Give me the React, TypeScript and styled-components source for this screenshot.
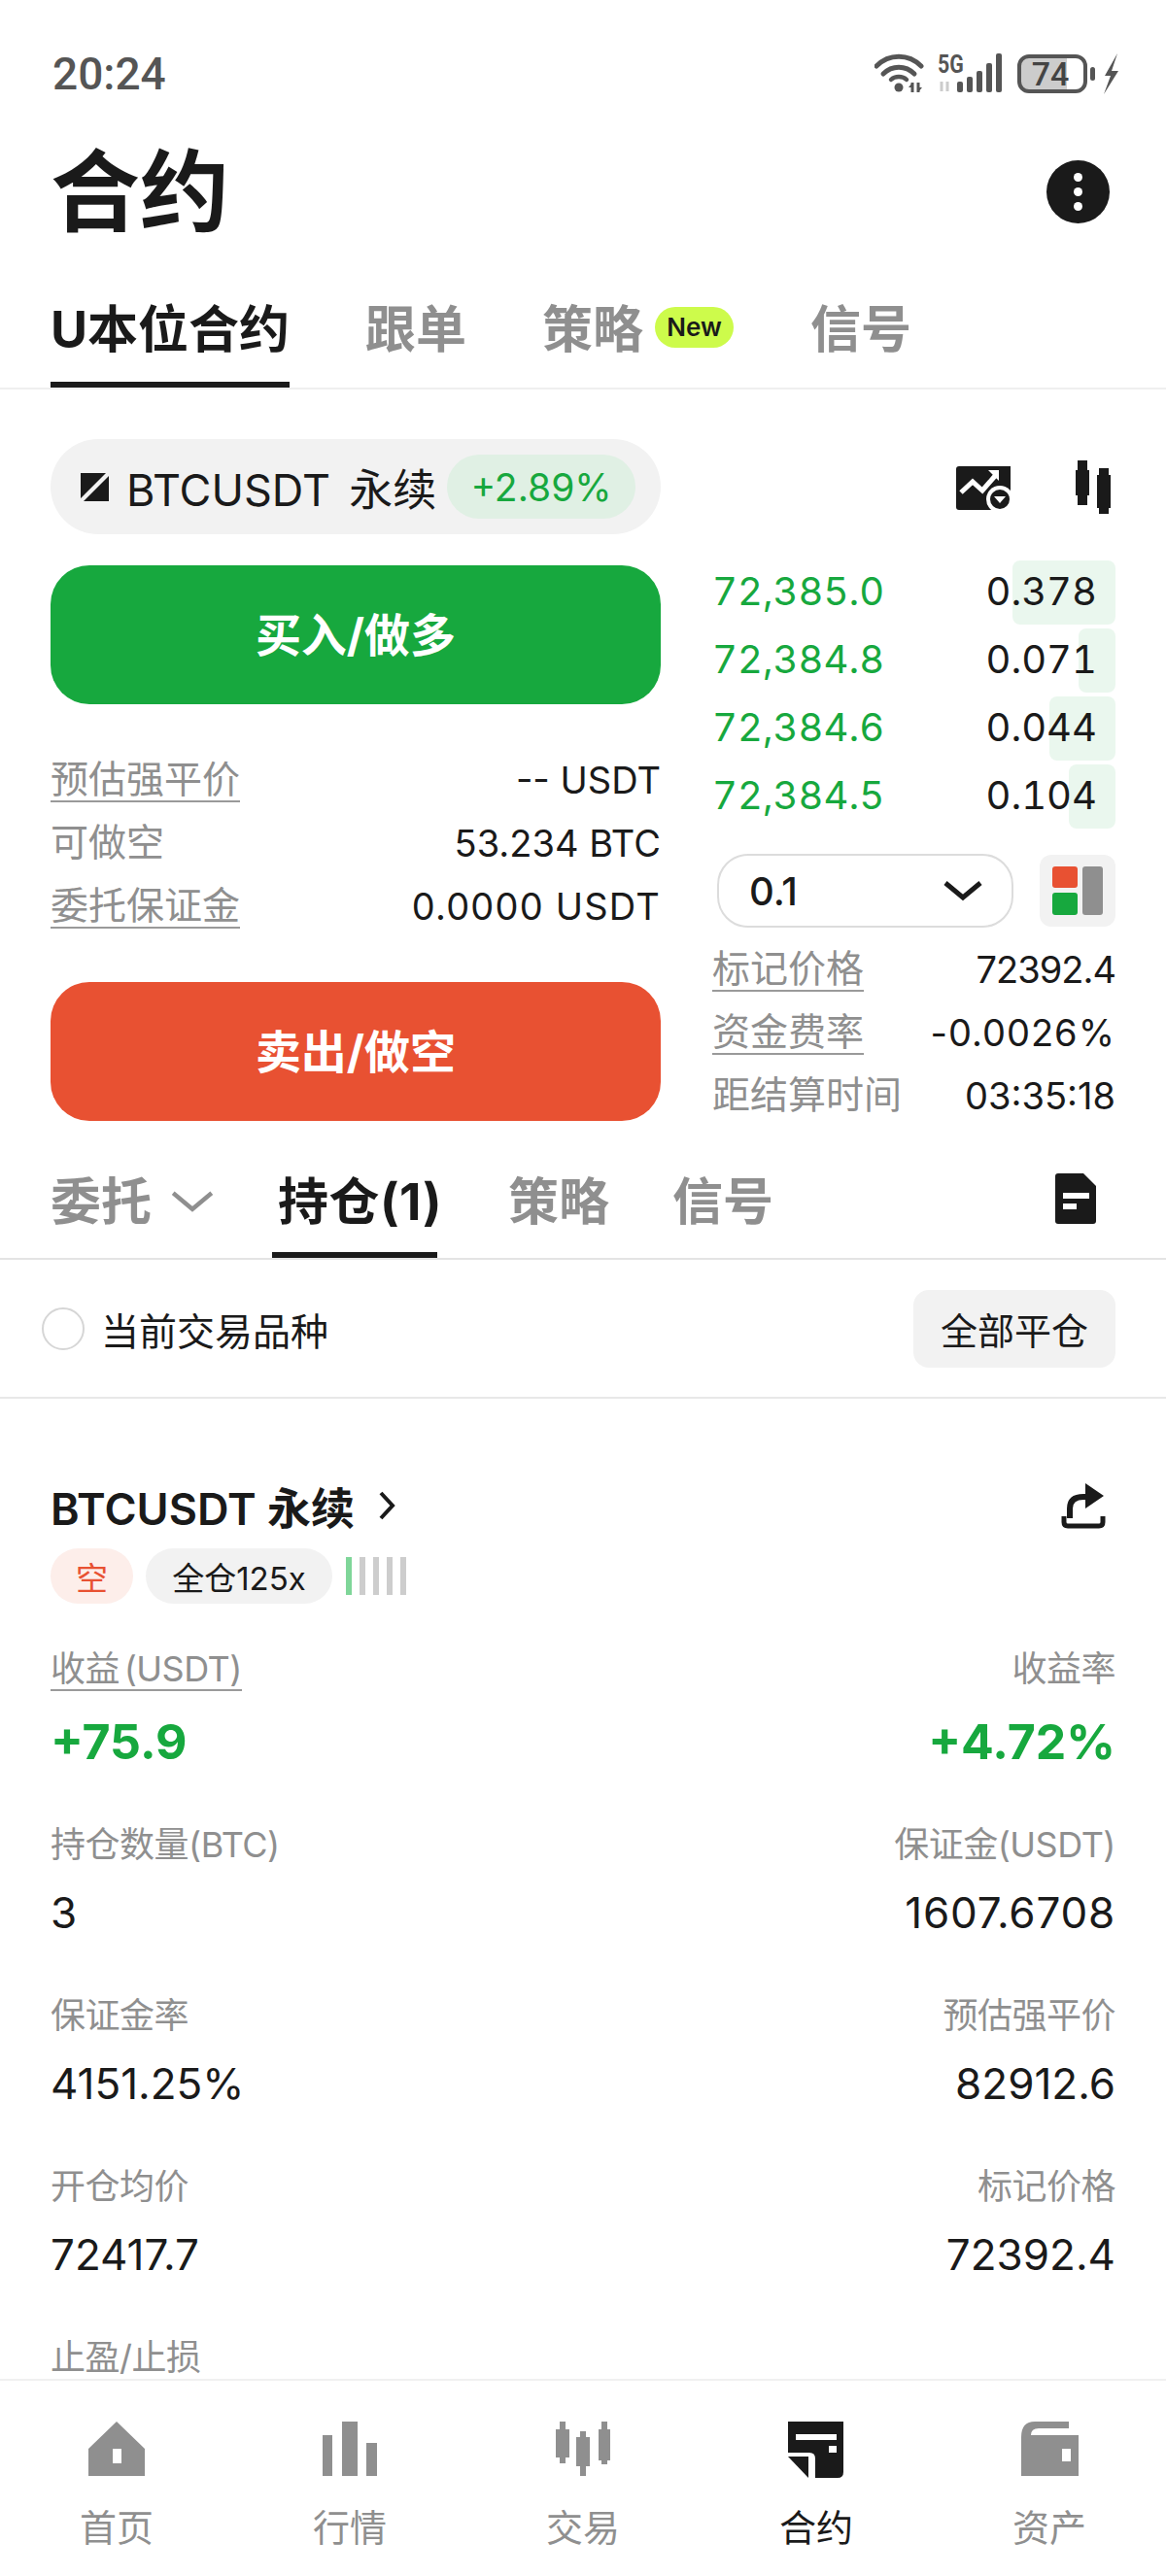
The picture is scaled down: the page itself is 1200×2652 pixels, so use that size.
import React from 'react';
import styled, { createGlobalStyle } from 'styled-components';

const GlobalStyle = createGlobalStyle`
  html, body {
    margin: 0;
    padding: 0;
    background: #fff;
  }
  body {
    font-family: Inter, "Noto Sans CJK SC", sans-serif;
    color: #1a1a1a;
  }
  * {
    box-sizing: border-box;
  }
`;

const GREEN = '#17a83e';
const RED = '#e85132';
const GREY = '#8f8f8f';
const INK = '#1a1a1a';

const Page = styled.div`
  width: 1200px;
  height: 2652px;
  display: flex;
  flex-direction: column;
  overflow: hidden;
`;

const Scroll = styled.div`
  flex: 1;
  min-height: 0;
  overflow: hidden;
`;

const StatusBar = styled.div`
  height: 130px;
  padding: 32px 48px 10px 54px;
  display: flex;
  align-items: center;
  justify-content: space-between;
`;

const Clock = styled.span`
  font-family: Roboto, sans-serif;
  font-size: 46px;
  font-weight: 500;
  color: #555;
`;

const StatusIcons = styled.div`
  display: flex;
  align-items: center;
`;

const IconGap = styled.span<{ $left?: number; $top?: number }>`
  display: flex;
  margin-left: ${(p) => p.$left ?? 0}px;
  margin-top: ${(p) => p.$top ?? 0}px;
`;

const SignalBox = styled.span`
  position: relative;
  display: flex;
  width: 68px;
  height: 42px;
  margin-left: 13px;
`;

const FiveG = styled.span`
  position: absolute;
  left: 0;
  top: 0;
  font-family: Roboto, sans-serif;
  font-size: 26px;
  line-height: 22px;
  font-weight: 700;
  color: #555;
  transform: scaleX(0.82);
  transform-origin: left center;
`;

const Battery = styled.div`
  width: 72px;
  height: 40px;
  margin-left: 14px;
  border: 4px solid #555;
  border-radius: 12px;
  background: linear-gradient(90deg, #ccc 0 74%, #fff 74%);
  display: flex;
  align-items: center;
  justify-content: center;
  font-family: Roboto, sans-serif;
  font-size: 34px;
  font-weight: 500;
  color: #444;
  padding-right: 4px;
`;

const BatteryNub = styled.span`
  width: 5px;
  height: 14px;
  margin: 0 8px 0 3px;
  border-radius: 3px;
  background: #555;
`;

const TitleRow = styled.div`
  height: 135px;
  padding: 0 58px 0 52px;
  display: flex;
  align-items: center;
  justify-content: space-between;
`;

const Title = styled.h1`
  margin: 0;
  font-size: 92px;
  font-weight: 700;
  line-height: 1;
`;

const MoreButton = styled.div`
  width: 65px;
  height: 65px;
  border-radius: 50%;
  background: ${INK};
  display: flex;
  flex-direction: column;
  align-items: center;
  justify-content: center;
  gap: 6px;
`;

const MoreDot = styled.span`
  width: 9px;
  height: 9px;
  border-radius: 50%;
  background: #fff;
`;

const TabBar = styled.div<{ $height: number }>`
  height: ${(p) => p.$height}px;
  padding: 0 52px;
  display: flex;
  align-items: stretch;
  border-bottom: 2px solid #efefef;
`;

const Tab = styled.div<{ $active?: boolean; $gap: number; $pad?: number }>`
  display: flex;
  align-items: center;
  margin-right: ${(p) => p.$gap}px;
  padding-top: ${(p) => p.$pad ?? 22}px;
  font-size: 52px;
  font-weight: 700;
  line-height: 1;
  white-space: nowrap;
  color: ${(p) => (p.$active ? INK : GREY)};
  border-bottom: 6px solid ${(p) => (p.$active ? INK : 'transparent')};
`;

const HoldingTab = styled(Tab)`
  width: 170px;
  padding-left: 6px;
  letter-spacing: 0.5px;
`;

const NewBadge = styled.span`
  width: 81px;
  height: 42px;
  margin-left: 12px;
  margin-top: -6px;
  border-radius: 21px;
  background: #cdfb4b;
  color: ${INK};
  font-size: 26px;
  font-weight: 600;
  display: flex;
  align-items: center;
  justify-content: center;
`;

const TabIcon = styled.div`
  margin-left: auto;
  margin-right: 72px;
  padding-top: 12px;
  display: flex;
  align-items: center;
`;

const TradeGrid = styled.div`
  padding: 51px 52px 0;
  display: grid;
  grid-template-columns: 628px 415px;
  column-gap: 53px;
`;

const Column = styled.div`
  display: flex;
  flex-direction: column;
`;

const SymbolPill = styled.div`
  height: 98px;
  border-radius: 49px;
  background: #f2f2f2;
  padding: 0 26px 0 31px;
  display: flex;
  align-items: center;
`;

const SymbolName = styled.span`
  margin-left: 18px;
  font-size: 45px;
  white-space: pre;
  word-spacing: -3px;
`;

const ChangePill = styled.span`
  margin-left: auto;
  width: 194px;
  height: 66px;
  border-radius: 33px;
  background: #e0f0e4;
  color: ${GREEN};
  font-size: 39px;
  display: flex;
  align-items: center;
  justify-content: center;
`;

const ActionButton = styled.div<{ $color: string; $top: number }>`
  height: 143px;
  margin-top: ${(p) => p.$top}px;
  padding-bottom: 6px;
  border-radius: 40px;
  background: ${(p) => p.$color};
  color: #fff;
  font-size: 47px;
  font-weight: 700;
  display: flex;
  align-items: center;
  justify-content: center;
`;

const InfoList = styled.div<{ $top: number }>`
  margin-top: ${(p) => p.$top}px;
  display: flex;
  flex-direction: column;
`;

const InfoRow = styled.div`
  height: 65px;
  display: flex;
  align-items: center;
  justify-content: space-between;
`;

const InfoLabel = styled.span<{ $dashed?: boolean }>`
  font-size: 39px;
  line-height: 44px;
  color: ${GREY};
  border-bottom: 2px solid ${(p) => (p.$dashed ? '#9a9a9a' : 'transparent')};
`;

const InfoValue = styled.span<{ $spread?: number }>`
  font-size: 38px;
  letter-spacing: ${(p) => p.$spread ?? 0}px;
  color: ${INK};
`;

const ChartTools = styled.div`
  height: 125px;
  padding: 22px 5px 0 251px;
  display: flex;
  align-items: flex-start;
  justify-content: space-between;
`;

const DepthRow = styled.div`
  position: relative;
  height: 66px;
  margin-bottom: 4px;
  padding: 0 19px 3px 0;
  display: flex;
  align-items: center;
  justify-content: space-between;
  font-size: 40px;
  font-variant-numeric: tabular-nums;
`;

const DepthBar = styled.span`
  position: absolute;
  right: 0;
  top: 0;
  bottom: 0;
  border-radius: 8px;
  background: rgba(23, 168, 62, 0.09);
`;

const DepthPrice = styled.span`
  position: relative;
  color: ${GREEN};
`;

const DepthQty = styled.span`
  position: relative;
`;

const ControlRow = styled.div`
  margin-top: 22px;
  margin-bottom: 10px;
  padding-left: 5px;
  display: flex;
  align-items: center;
  justify-content: space-between;
`;

const StepSelect = styled.div`
  width: 305px;
  height: 76px;
  border: 2px solid #dcdcdc;
  border-radius: 32px;
  padding: 0 30px 0 31px;
  display: flex;
  align-items: center;
  justify-content: space-between;
  font-size: 40px;
  font-weight: 500;
`;

const LayoutButton = styled.div`
  width: 78px;
  height: 74px;
  border-radius: 12px;
  background: #f2f2f2;
  display: flex;
  align-items: center;
  justify-content: center;
`;

const OrdersTabs = styled(TabBar)`
  padding: 0 0 0 52px;
  border-bottom-color: #e4e4e4;
`;

const FilterRow = styled.div`
  height: 143px;
  padding: 0 52px 0 43px;
  display: flex;
  align-items: center;
  border-bottom: 2px solid #e8e8e8;
`;

const Radio = styled.span`
  width: 44px;
  height: 44px;
  border-radius: 50%;
  border: 2px solid #d6d6d6;
`;

const FilterText = styled.span`
  margin-left: 17px;
  font-size: 39px;
`;

const CloseAll = styled.div`
  margin-left: auto;
  width: 208px;
  height: 80px;
  border-radius: 16px;
  background: #f2f2f2;
  font-size: 38px;
  display: flex;
  align-items: center;
  justify-content: center;
`;

const Position = styled.div`
  padding: 80px 52px 0;
`;

const PositionHead = styled.div`
  height: 60px;
  display: flex;
  align-items: center;
  padding: 0 10px 0 0;
`;

const PositionName = styled.span`
  font-size: 45px;
  font-weight: 600;
`;

const ShareSlot = styled.span`
  margin-left: auto;
  display: flex;
`;

const TagRow = styled.div`
  margin-top: 14px;
  display: flex;
  align-items: center;
`;

const Tag = styled.span<{ $tone: 'red' | 'grey'; $width: number }>`
  width: ${(p) => p.$width}px;
  height: 57px;
  margin-right: 13px;
  border-radius: 29px;
  font-size: 33px;
  display: flex;
  align-items: center;
  justify-content: center;
  background: ${(p) => (p.$tone === 'red' ? '#fdeeea' : '#f2f2f2')};
  color: ${(p) => (p.$tone === 'red' ? RED : INK)};
`;

const LeverBars = styled.span`
  display: flex;
  gap: 8px;
  margin-left: 1px;
`;

const LeverBar = styled.span<{ $on?: boolean }>`
  width: 6px;
  height: 39px;
  background: ${(p) => (p.$on ? '#7fd699' : '#cdcdcd')};
`;

const Stats = styled.div`
  margin-top: 46px;
  display: grid;
  grid-template-columns: 1fr 1fr;
  row-gap: 59px;
`;

const Stat = styled.div<{ $right?: boolean }>`
  display: flex;
  flex-direction: column;
  align-items: ${(p) => (p.$right ? 'flex-end' : 'flex-start')};
`;

const StatLabel = styled.span<{ $dashed?: boolean }>`
  font-size: 36px;
  line-height: 42px;
  letter-spacing: -0.5px;
  word-spacing: -5px;
  color: ${GREY};
  border-bottom: 2px solid ${(p) => (p.$dashed ? '#9a9a9a' : 'transparent')};
`;

const StatValue = styled.span<{ $gain?: boolean; $spread?: number }>`
  margin-top: ${(p) => (p.$gain ? 26 : 21)}px;
  margin-bottom: 0;
  line-height: 52px;
  letter-spacing: ${(p) => p.$spread ?? 0}px;
  font-size: ${(p) => (p.$gain ? 50 : 44)}px;
  font-weight: ${(p) => (p.$gain ? 700 : 400)};
  color: ${(p) => (p.$gain ? GREEN : INK)};
`;

const BottomNav = styled.nav`
  height: 203px;
  border-top: 2px solid #f0f0f0;
  display: grid;
  grid-template-columns: repeat(5, 240px);
`;

const NavItem = styled.div<{ $active?: boolean }>`
  padding-top: 42px;
  display: flex;
  flex-direction: column;
  align-items: center;
  color: ${(p) => (p.$active ? INK : GREY)};
`;

const NavIconBox = styled.span`
  height: 58px;
  display: flex;
`;

const NavLabel = styled.span`
  margin-top: 26px;
  font-size: 38px;
  line-height: 50px;
`;

const WifiIcon = () => (
  <svg width="52" height="42" viewBox="0 0 52 42" fill="none" stroke="#555" strokeLinecap="round">
    <path d="M2 13C15 0 35 0 48 13" strokeWidth="5" />
    <path d="M9 21C18 12 32 12 41 21" strokeWidth="5" />
    <path d="M17 27C21 23 29 23 33 27" strokeWidth="4.5" />
    <circle cx="25" cy="35" r="4.5" fill="#555" stroke="none" />
    <path d="M39 30v10M45 30v10" strokeWidth="3" stroke="#555" strokeLinecap="butt" />
    <path d="M35 35l4-5v5zM49 35l-4 5v-5z" fill="#555" stroke="none" />
  </svg>
);

const SignalBars = () => (
  <svg width="68" height="42" viewBox="0 0 68 42">
    <path d="M4 29v10M10 29v10" stroke="#ccc" strokeWidth="3" />
    <rect x="20" y="29" width="6" height="11" rx="2" fill="#555" />
    <rect x="30" y="24" width="6" height="16" rx="2" fill="#555" />
    <rect x="40" y="18" width="6" height="22" rx="2" fill="#555" />
    <rect x="50" y="10" width="6" height="30" rx="2" fill="#555" />
    <rect x="60" y="0" width="6" height="40" rx="2" fill="#555" />
  </svg>
);

const BoltIcon = () => (
  <svg width="17" height="42" viewBox="0 0 17 42">
    <path d="M15 0L2 23h6L1 42l15-24H9z" fill="#555" />
  </svg>
);

const PairIcon = () => (
  <svg width="29" height="29" viewBox="0 0 29 29">
    <path d="M0 0h26L0 26zM29 3v26H3z" fill={INK} />
  </svg>
);

const ChartIcon = () => (
  <svg width="56" height="45" viewBox="0 0 56 45">
    <path d="M3 0h53v30L40 45H3q-3 0-3-3V3q0-3 3-3z" fill={INK} />
    <path d="M5 27l12-11 10 9 13-15" stroke="#fff" strokeWidth="5" fill="none" />
    <path d="M33 4h11v11z" fill="#fff" />
    <circle cx="45" cy="34" r="14" fill="#fff" />
    <circle cx="45" cy="34" r="10" fill={INK} />
    <path d="M39 31h12l-6 7z" fill="#fff" />
  </svg>
);

const CandlesIcon = () => (
  <svg width="36" height="55" viewBox="0 0 36 55" fill={INK}>
    <rect x="2" width="10" height="46" />
    <rect y="10" width="14" height="26" />
    <rect x="24" y="8" width="10" height="47" />
    <rect x="22" y="15" width="14" height="34" />
  </svg>
);

const ChevronDown = ({ size, color, weight }: { size: number; color: string; weight: number }) => (
  <svg width={size} height={size * 0.55} viewBox="0 0 40 22" fill="none">
    <path d="M2 3l18 15L38 3" stroke={color} strokeWidth={weight} />
  </svg>
);

const LayoutIcon = () => (
  <svg width="52" height="50" viewBox="0 0 52 50">
    <rect width="26" height="22" rx="3" fill={RED} />
    <rect y="27" width="26" height="23" rx="3" fill={GREEN} />
    <rect x="31" width="21" height="50" rx="3" fill={GREY} />
  </svg>
);

const DocIcon = () => (
  <svg width="42" height="52" viewBox="0 0 42 52">
    <path d="M3 0h26l13 13v36q0 3-3 3H3q-3 0-3-3V3q0-3 3-3z" fill={INK} />
    <rect x="8" y="20" width="27" height="6" fill="#fff" />
    <rect x="8" y="31" width="14" height="6" fill="#fff" />
  </svg>
);

const ChevronRight = () => (
  <svg width="20" height="32" viewBox="0 0 20 32" fill="none">
    <path d="M4 3l12 13L4 29" stroke={INK} strokeWidth="4" />
  </svg>
);

const ShareIcon = () => (
  <svg width="46" height="47" viewBox="0 0 46 47" fill="none">
    <path d="M3 34v6q0 4 4 4h32q4 0 4-4v-6" stroke={INK} strokeWidth="5" />
    <path d="M9 36V26q0-12 14-12h5" stroke={INK} strokeWidth="6" />
    <path d="M25 0l19 13-19 13z" fill={INK} />
  </svg>
);

const HomeIcon = () => (
  <svg width="58" height="56" viewBox="0 0 58 56" fill="currentColor">
    <path d="M29 0l29 28v28H0V28zM25 28v15h9V28z" fillRule="evenodd" />
  </svg>
);

const MarketIcon = () => (
  <svg width="56" height="56" viewBox="0 0 56 56" fill="currentColor">
    <rect y="14" width="10" height="42" />
    <rect x="20" width="16" height="56" />
    <rect x="45" y="22" width="11" height="34" />
  </svg>
);

const TradeIcon = () => (
  <svg width="56" height="56" viewBox="0 0 56 56" fill="currentColor">
    <path d="M4 0h6v8h4v29h-4v6H4v-6H0V8h4z" />
    <path d="M25 10h6v6h4v30h-4v10h-6V46h-4V16h4z" />
    <path d="M47 0h6v8h3v32h-3v4h-6v-4h-3V8h3z" />
  </svg>
);

const ContractIcon = () => (
  <svg width="58" height="58" viewBox="0 0 58 58" fill="currentColor">
    <path d="M0 0h57v52q0 6-6 6H28V38q0-6-6-6H0z" />
    <path d="M0 36h21v22z" />
    <rect x="8" y="13" width="42" height="6" fill="#fff" />
    <rect x="42" y="25" width="8" height="7" fill="#fff" />
  </svg>
);

const WalletIcon = () => (
  <svg width="59" height="56" viewBox="0 0 59 56" fill="currentColor">
    <path d="M0 16Q0 0 14 0h35v7H18q-8 0-8 7h49v42H0zM42 28v13h9V28z" fillRule="evenodd" />
  </svg>
);

const depth = [
  { price: '72,385.0', qty: '0.378', bar: 106 },
  { price: '72,384.8', qty: '0.071', bar: 38 },
  { price: '72,384.6', qty: '0.044', bar: 68 },
  { price: '72,384.5', qty: '0.104', bar: 48 },
];

const stats = [
  { left: ['持仓数量(BTC)', '3'], right: ['保证金(USDT)', '1607.6708'], spread: 0.8 },
  { left: ['保证金率', '4151.25%'], right: ['预估强平价', '82912.6'] },
  { left: ['开仓均价', '72417.7'], right: ['标记价格', '72392.4'] },
];

const navItems = [
  { label: '首页', icon: <HomeIcon /> },
  { label: '行情', icon: <MarketIcon /> },
  { label: '交易', icon: <TradeIcon /> },
  { label: '合约', icon: <ContractIcon />, active: true },
  { label: '资产', icon: <WalletIcon /> },
];

export default function App() {
  return (
    <Page>
      <GlobalStyle />
      <Scroll>
        <StatusBar>
          <Clock>20:24</Clock>
          <StatusIcons>
            <WifiIcon />
            <SignalBox>
              <SignalBars />
              <FiveG>5G</FiveG>
            </SignalBox>
            <Battery>74</Battery>
            <BatteryNub />
            <BoltIcon />
          </StatusIcons>
        </StatusBar>

        <TitleRow>
          <Title>合约</Title>
          <MoreButton>
            <MoreDot />
            <MoreDot />
            <MoreDot />
          </MoreButton>
        </TitleRow>

        <TabBar $height={136}>
          <Tab $active $gap={78}>U本位合约</Tab>
          <Tab $gap={78}>跟单</Tab>
          <Tab $gap={79}>策略<NewBadge>New</NewBadge></Tab>
          <Tab $gap={0}>信号</Tab>
        </TabBar>

        <TradeGrid>
          <Column>
            <SymbolPill>
              <PairIcon />
              <SymbolName>BTCUSDT  永续</SymbolName>
              <ChangePill>+2.89%</ChangePill>
            </SymbolPill>
            <ActionButton $color={GREEN} $top={32}>买入/做多</ActionButton>
            <InfoList $top={45}>
              <InfoRow>
                <InfoLabel $dashed>预估强平价</InfoLabel>
                <InfoValue>-- USDT</InfoValue>
              </InfoRow>
              <InfoRow>
                <InfoLabel>可做空</InfoLabel>
                <InfoValue>53.234 BTC</InfoValue>
              </InfoRow>
              <InfoRow>
                <InfoLabel $dashed>委托保证金</InfoLabel>
                <InfoValue $spread={1.2}>0.0000 USDT</InfoValue>
              </InfoRow>
            </InfoList>
            <ActionButton $color={RED} $top={46}>卖出/做空</ActionButton>
          </Column>

          <Column>
            <ChartTools>
              <IconGap $top={6}>
                <ChartIcon />
              </IconGap>
              <CandlesIcon />
            </ChartTools>
            {depth.map((row) => (
              <DepthRow key={row.price}>
                <DepthBar style={{ width: row.bar }} />
                <DepthPrice>{row.price}</DepthPrice>
                <DepthQty>{row.qty}</DepthQty>
              </DepthRow>
            ))}
            <ControlRow>
              <StepSelect>
                0.1
                <ChevronDown size={40} color={INK} weight={5} />
              </StepSelect>
              <LayoutButton>
                <LayoutIcon />
              </LayoutButton>
            </ControlRow>
            <InfoRow>
              <InfoLabel $dashed>标记价格</InfoLabel>
              <InfoValue $spread={-1}>72392.4</InfoValue>
            </InfoRow>
            <InfoRow>
              <InfoLabel $dashed>资金费率</InfoLabel>
              <InfoValue $spread={1}>-0.0026%</InfoValue>
            </InfoRow>
            <InfoRow>
              <InfoLabel>距结算时间</InfoLabel>
              <InfoValue>03:35:18</InfoValue>
            </InfoRow>
          </Column>
        </TradeGrid>

        <OrdersTabs $height={137}>
          <Tab $gap={60} $pad={26}>
            委托
            <IconGap $left={20}>
              <ChevronDown size={44} color={GREY} weight={4} />
            </IconGap>
          </Tab>
          <HoldingTab $active $gap={73} $pad={26}>持仓(1)</HoldingTab>
          <Tab $gap={65} $pad={26}>策略</Tab>
          <Tab $gap={0} $pad={26}>信号</Tab>
          <TabIcon>
            <DocIcon />
          </TabIcon>
        </OrdersTabs>

        <FilterRow>
          <Radio />
          <FilterText>当前交易品种</FilterText>
          <CloseAll>全部平仓</CloseAll>
        </FilterRow>

        <Position>
          <PositionHead>
            <PositionName>BTCUSDT 永续</PositionName>
            <IconGap $left={23}>
              <ChevronRight />
            </IconGap>
            <ShareSlot>
              <ShareIcon />
            </ShareSlot>
          </PositionHead>
          <TagRow>
            <Tag $tone="red" $width={85}>空</Tag>
            <Tag $tone="grey" $width={192}>全仓125x</Tag>
            <LeverBars>
              <LeverBar $on />
              <LeverBar />
              <LeverBar />
              <LeverBar />
              <LeverBar />
            </LeverBars>
          </TagRow>
          <Stats>
            <Stat>
              <StatLabel $dashed>收益 (USDT)</StatLabel>
              <StatValue $gain>+75.9</StatValue>
            </Stat>
            <Stat $right>
              <StatLabel>收益率</StatLabel>
              <StatValue $gain>+4.72%</StatValue>
            </Stat>
            {stats.map((row) => (
              <React.Fragment key={row.left[0]}>
                <Stat>
                  <StatLabel>{row.left[0]}</StatLabel>
                  <StatValue>{row.left[1]}</StatValue>
                </Stat>
                <Stat $right>
                  <StatLabel>{row.right[0]}</StatLabel>
                  <StatValue $spread={row.spread}>{row.right[1]}</StatValue>
                </Stat>
              </React.Fragment>
            ))}
            <Stat>
              <StatLabel>止盈/止损</StatLabel>
            </Stat>
          </Stats>
        </Position>
      </Scroll>

      <BottomNav>
        {navItems.map((item) => (
          <NavItem key={item.label} $active={item.active}>
            <NavIconBox>{item.icon}</NavIconBox>
            <NavLabel>{item.label}</NavLabel>
          </NavItem>
        ))}
      </BottomNav>
    </Page>
  );
}
